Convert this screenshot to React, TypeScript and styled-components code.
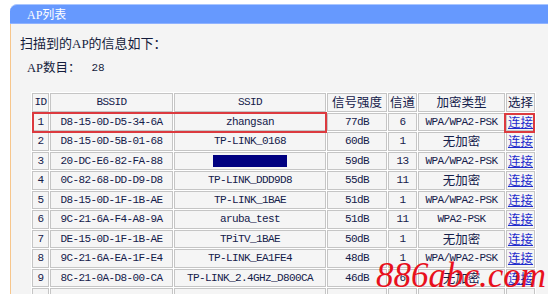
import React from "react";
import styled, { createGlobalStyle } from "styled-components";

type Ap = {
  id: string;
  bssid: string;
  ssid: string;
  signal: string;
  channel: string;
  security: string;
  hidden?: boolean;
};

const aps: Ap[] = [
  { id: "1", bssid: "D8-15-0D-D5-34-6A", ssid: "zhangsan", signal: "77dB", channel: "6", security: "WPA/WPA2-PSK" },
  { id: "2", bssid: "D8-15-0D-5B-01-68", ssid: "TP-LINK_0168", signal: "60dB", channel: "1", security: "无加密" },
  { id: "3", bssid: "20-DC-E6-82-FA-88", ssid: "", signal: "59dB", channel: "13", security: "WPA/WPA2-PSK", hidden: true },
  { id: "4", bssid: "0C-82-68-DD-D9-D8", ssid: "TP-LINK_DDD9D8", signal: "55dB", channel: "11", security: "无加密" },
  { id: "5", bssid: "D8-15-0D-1F-1B-AE", ssid: "TP-LINK_1BAE", signal: "51dB", channel: "1", security: "WPA/WPA2-PSK" },
  { id: "6", bssid: "9C-21-6A-F4-A8-9A", ssid: "aruba_test", signal: "51dB", channel: "11", security: "WPA2-PSK" },
  { id: "7", bssid: "DE-15-0D-1F-1B-AE", ssid: "TPiTV_1BAE", signal: "50dB", channel: "1", security: "无加密" },
  { id: "8", bssid: "9C-21-6A-EA-1F-E4", ssid: "TP-LINK_EA1FE4", signal: "48dB", channel: "1", security: "WPA/WPA2-PSK" },
  { id: "9", bssid: "8C-21-0A-D8-00-CA", ssid: "TP-LINK_2.4GHz_D800CA", signal: "46dB", channel: "6", security: "无加密" },
];

const isCjk = (s: string) => /[\u4e00-\u9fff]/.test(s);

const App: React.FC = () => {
  return (
    <Page>
      <GlobalStyle />
      <TitleBar>AP列表</TitleBar>
      <Panel>
        <Intro>扫描到的AP的信息如下：</Intro>
        <Count>
          <span>AP数目：</span>
          <Num>28</Num>
        </Count>
        <TableWrap>
          <ApTable>
            <thead>
              <tr>
                <Th $w={17}>ID</Th>
                <Th $w={123}>BSSID</Th>
                <Th $w={152}>SSID</Th>
                <Th $w={60} $cjk>信号强度</Th>
                <Th $w={29} $cjk>信道</Th>
                <Th $w={87} $cjk>加密类型</Th>
                <Th $w={29} $cjk>选择</Th>
              </tr>
            </thead>
            <tbody>
              {aps.map((ap) => (
                <tr key={ap.id}>
                  <Td>{ap.id}</Td>
                  <Td>{ap.bssid}</Td>
                  <Td>{ap.hidden ? <Hidden /> : ap.ssid}</Td>
                  <Td>{ap.signal}</Td>
                  <Td>{ap.channel}</Td>
                  <Td $cjk={isCjk(ap.security)}>{ap.security}</Td>
                  <Td $cjk>
                    <Link href="#">连接</Link>
                  </Td>
                </tr>
              ))}
              {/* next row is cut off by the window, only its borders show */}
              <tr>
                <Td />
                <Td />
                <Td />
                <Td />
                <Td />
                <Td />
                <Td />
              </tr>
            </tbody>
          </ApTable>
          <RowMark />
          <LinkMark />
        </TableWrap>
      </Panel>
      <Watermark>886abc.com</Watermark>
    </Page>
  );
};

export default App;

const GlobalStyle = createGlobalStyle`
  html, body {
    margin: 0;
    padding: 0;
    background: #ffffff;
    overflow: hidden;
  }
  body {
    width: 548px;
    height: 294px;
    font-family: "Noto Sans CJK SC", sans-serif;
  }
`;

const Page = styled.div`
  position: relative;
  width: 548px;
  height: 294px;
  padding: 4px 0 0 10px;
  box-sizing: border-box;
  display: flex;
  flex-direction: column;
  overflow: hidden;
`;

const TitleBar = styled.div`
  height: 23px;
  box-sizing: border-box;
  display: flex;
  align-items: center;
  padding-left: 17px;
  background: #6699fe;
  border-top: 1px solid #a9c6ff;
  border-bottom: 1px solid #8fb2ff;
  border-top-left-radius: 7px;
  color: #ffffff;
  font-size: 12px;
  font-family: "Liberation Serif", "Noto Sans CJK SC", serif;
`;

const Panel = styled.div`
  flex: 1;
  background: #f4f4f4;
  border-left: 1px solid #f7c68c;
  padding: 12px 0 0 9px;
  color: #141c3c;
`;

const Intro = styled.div`
  font-size: 13px;
  line-height: 16px;
  font-family: "Liberation Serif", "Noto Sans CJK SC", serif;
`;

const Count = styled.div`
  margin-top: 8px;
  padding-left: 7px;
  display: flex;
  gap: 11px;
  font-size: 12.5px;
  line-height: 16px;
  font-family: "Liberation Serif", "Noto Sans CJK SC", serif;
`;

const Num = styled.span`
  font-family: "Liberation Mono", monospace;
  font-size: 11px;
`;

const TableWrap = styled.div`
  position: relative;
  margin: 16px 0 0 11px;
  width: 505px;
`;

const ApTable = styled.table`
  border-collapse: separate;
  border-spacing: 1px;
  table-layout: fixed;
  width: 505px;
  background: #ffffff;
`;

const cellBase = `
  box-sizing: border-box;
  height: 18.5px;
  padding: 0;
  border: 1px solid #c5c5c5;
  background: #f5f5f5;
  text-align: center;
  white-space: nowrap;
  overflow: hidden;
  color: #14204a;
  line-height: 16px;
`;

const Th = styled.th<{ $w: number; $cjk?: boolean }>`
  ${cellBase}
  width: ${(p) => p.$w}px;
  font-weight: normal;
  font-family: ${(p) =>
    p.$cjk ? `"Noto Sans CJK SC", sans-serif` : `"Liberation Mono", monospace`};
  font-size: ${(p) => (p.$cjk ? "12.5px" : "11px")};
  letter-spacing: ${(p) => (p.$cjk ? "0" : "-0.6px")};
`;

const Td = styled.td<{ $cjk?: boolean }>`
  ${cellBase}
  font-family: ${(p) =>
    p.$cjk ? `"Noto Sans CJK SC", sans-serif` : `"Liberation Mono", monospace`};
  font-size: ${(p) => (p.$cjk ? "12.5px" : "11px")};
  letter-spacing: ${(p) => (p.$cjk ? "0" : "-0.6px")};
`;

const Hidden = styled.span`
  display: inline-block;
  vertical-align: middle;
  width: 74px;
  height: 12px;
  background: #000080;
`;

const Link = styled.a`
  color: #1f2ccc;
  text-decoration: underline;
`;

const RowMark = styled.div`
  position: absolute;
  left: 1px;
  top: 20px;
  width: 295px;
  height: 21px;
  box-sizing: border-box;
  border: 2px solid #dc3a3f;
  pointer-events: none;
`;

const LinkMark = styled.div`
  position: absolute;
  left: 473px;
  top: 21px;
  width: 31px;
  height: 20px;
  box-sizing: border-box;
  border: 2px solid #dc3a3f;
  pointer-events: none;
`;

const Watermark = styled.div`
  position: absolute;
  left: 376px;
  top: 256px;
  font-family: "Liberation Serif", serif;
  font-style: italic;
  font-size: 35px;
  line-height: 40px;
  color: #e8101c;
  pointer-events: none;
`;
